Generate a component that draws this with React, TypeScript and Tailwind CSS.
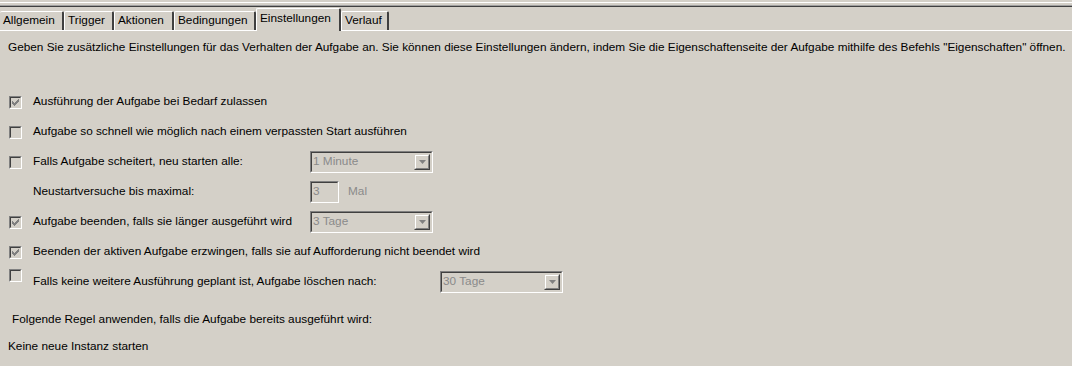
import React from "react";

const Check = ({ checked, className = "" }: { checked?: boolean; className?: string }) => (
  <div className={`w-[13px] h-[13px] border border-t-[#808080] border-l-[#808080] border-b-white border-r-white shrink-0 ${className}`}>
    <div className="w-full h-full border border-t-[#404040] border-l-[#404040] border-b-[#d4d0c8] border-r-[#d4d0c8] bg-[#d4d0c8]">
      {checked && (
        <svg width="9" height="9" viewBox="0 0 9 9" className="block">
          <path d="M1 3h1v1h1v1h1V4h1V3h1V2h1V1h1v3h-1v1h-1v1h-1v1h-1v1H3V7H2V6H1z" fill="#808080" />
        </svg>
      )}
    </div>
  </div>
);

const Sunken = ({ className = "", children }: { className?: string; children?: React.ReactNode }) => (
  <div className={`border border-t-[#808080] border-l-[#808080] border-b-white border-r-white ${className}`}>
    <div className="w-full h-full border border-t-[#404040] border-l-[#404040] border-b-[#d4d0c8] border-r-[#d4d0c8] bg-[#d4d0c8] flex items-center">
      {children}
    </div>
  </div>
);

const Combo = ({ value, className = "" }: { value: string; className?: string }) => (
  <Sunken className={`h-[22px] w-[123px] ${className}`}>
    <span className="flex-1 pl-[1px] text-[#8a8a8a] leading-none">{value}</span>
    <div className="w-[16px] h-[16px] mr-[1px] border border-t-[#d4d0c8] border-l-[#d4d0c8] border-b-[#404040] border-r-[#404040]">
      <div className="w-full h-full border border-t-white border-l-white border-b-[#808080] border-r-[#808080] flex items-center justify-center">
        <svg width="7" height="4" viewBox="0 0 7 4" className="block">
          <path d="M0 0h7L3.5 4z" fill="#808080" />
        </svg>
      </div>
    </div>
  </Sunken>
);

const Tab = ({ label, w, first }: { label: string; w: number; first?: boolean }) => (
  <div
    style={{ width: w }}
    className={`h-[19px] shrink-0 border-t border-t-white ${first ? "" : "border-l border-l-white"} border-r-2 border-r-[#404040] rounded-tl-[2px] rounded-tr-[2px] flex items-center pl-[3px]`}
  >
    <span className="leading-none">{label}</span>
  </div>
);

export default function App() {
  return (
    <div className="w-[1072px] h-[366px] bg-[#d4d0c8] overflow-hidden text-black text-[11.8px] font-['Liberation_Sans',Tahoma,sans-serif]">
      <div className="h-[2px]" />
      <div className="h-px bg-white" />
      <div className="h-[2px]" />
      <div className="h-px bg-[#a0a0a0]" />
      <div className="h-px bg-[#404040]" />
      {/* tab row */}
      <div className="flex items-end h-[23px]">
        <Tab label="Allgemein" w={64} first />
        <Tab label="Trigger" w={50} />
        <Tab label="Aktionen" w={60} />
        <Tab label="Bedingungen" w={82} />
        <div className="relative z-10 -mb-px h-[23px] w-[85px] shrink-0 bg-[#d4d0c8] border-t border-l border-t-white border-l-white border-r-2 border-r-[#404040] rounded-tl-[2px] rounded-tr-[2px] flex items-start pt-[4px] pl-[3px]">
          <span className="leading-none">Einstellungen</span>
        </div>
        <Tab label="Verlauf" w={48} />
      </div>
      {/* panel */}
      <div className="border-t border-t-white">
        <div className="pl-[8px] pt-[10px] leading-[13px] whitespace-nowrap">
          Geben Sie zusätzliche Einstellungen für das Verhalten der Aufgabe an. Sie können diese Einstellungen ändern, indem Sie die Eigenschaftenseite der Aufgabe mithilfe des Befehls "Eigenschaften" öffnen.
        </div>
        <div className="mt-[33px] pl-[9px]">
          <div className="h-[30px] flex items-center">
            <Check checked />
            <span className="ml-[11px]">Ausführung der Aufgabe bei Bedarf zulassen</span>
          </div>
          <div className="h-[30px] flex items-center">
            <Check />
            <span className="ml-[11px]">Aufgabe so schnell wie möglich nach einem verpassten Start ausführen</span>
          </div>
          <div className="h-[30px] flex items-center">
            <Check />
            <span className="ml-[11px] w-[277px]">Falls Aufgabe scheitert, neu starten alle:</span>
            <Combo value="1 Minute" />
          </div>
          <div className="h-[30px] flex items-center">
            <span className="ml-[24px] w-[277px]">Neustartversuche bis maximal:</span>
            <Sunken className="h-[22px] w-[29px]">
              <span className="pl-[1px] text-[#8a8a8a] leading-none">3</span>
            </Sunken>
            <span className="ml-[9px] text-[#8a8a8a]">Mal</span>
          </div>
          <div className="h-[30px] flex items-center">
            <Check checked />
            <span className="ml-[11px] w-[277px]">Aufgabe beenden, falls sie länger ausgeführt wird</span>
            <Combo value="3 Tage" />
          </div>
          <div className="h-[30px] flex items-center">
            <Check checked />
            <span className="ml-[11px]">Beenden der aktiven Aufgabe erzwingen, falls sie auf Aufforderung nicht beendet wird</span>
          </div>
          <div className="h-[30px] flex items-center">
            <Check className="self-start mt-[2px]" />
            <span className="ml-[11px] w-[407px]">Falls keine weitere Ausführung geplant ist, Aufgabe löschen nach:</span>
            <Combo value="30 Tage" />
          </div>
        </div>
        <div className="mt-[16px] pl-[12px] leading-[13px]">Folgende Regel anwenden, falls die Aufgabe bereits ausgeführt wird:</div>
        <div className="mt-[14px] pl-[8px] leading-[13px]">Keine neue Instanz starten</div>
      </div>
    </div>
  );
}
